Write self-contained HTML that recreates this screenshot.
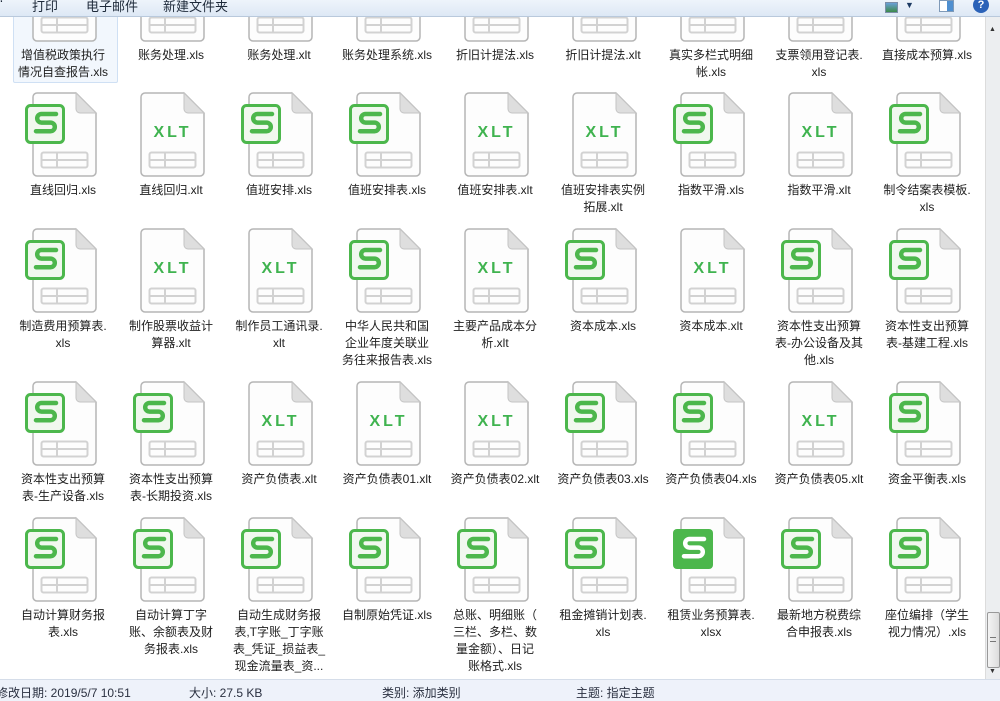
<!DOCTYPE html>
<html><head><meta charset="utf-8"><style>
*{margin:0;padding:0;box-sizing:border-box}
body{width:1000px;height:701px;overflow:hidden;background:#fff;font-family:"Liberation Sans","Noto Sans CJK SC",sans-serif;font-size:12px;color:#1e1e1e;position:relative}
#tb{position:absolute;left:0;top:0;width:1000px;height:17px;background:linear-gradient(#eef4fb,#dde8f5);border-bottom:1px solid #b9c9dc;font-size:13px}
#tb span{position:absolute;top:-4px;color:#1e2a3a}
#area{position:absolute;left:0;top:17px;width:985px;height:662px;overflow:hidden;background:#fff}
.it{position:absolute;width:108px;height:160px}
.it svg{position:absolute;left:15px;top:-1px;width:74px;height:86px;overflow:visible}
.lb{position:absolute;left:0;top:90px;width:108px;text-align:center;line-height:17px;font-size:12px;white-space:nowrap}
#sb{position:absolute;left:985px;top:17px;width:15px;height:662px;background:#eceef0;border-left:1px solid #dcdcdc}
#st{position:absolute;left:0;top:679px;width:1000px;height:22px;background:#eef2fa;border-top:1px solid #d5dde9;font-size:12px;color:#2a3040}
#st span{position:absolute;top:4px}
</style></head><body>
<svg width="0" height="0" style="position:absolute">
<defs>
<g id="pg">
<path d="M1,5a4,4 0 0 1 4-4H44L64,21V80a4,4 0 0 1-4,4H5a4,4 0 0 1-4-4Z" fill="#fdfdfd" stroke="#b5b5b5" stroke-width="1.5"/>
<path d="M44,1V17a4,4 0 0 0 4,4H64Z" fill="#dedede" stroke="#c4c4c4" stroke-width="1"/>
<rect x="9.5" y="60.5" width="46" height="15" rx="2" fill="none" stroke="#d2d2d2" stroke-width="2"/>
<line x1="10" y1="68" x2="55" y2="68" stroke="#d2d2d2" stroke-width="2"/>
<line x1="25" y1="61" x2="25" y2="75" stroke="#d2d2d2" stroke-width="2"/>
</g>
<g id="s">
<use href="#pg"/>
<rect x="-5.5" y="13.5" width="37" height="37" rx="4" fill="#f1f8ef" stroke="#4cb74c" stroke-width="3"/>
<path d="M24,22H9.5a4.3,4.3 0 0 0 0,8.6H18.5a4.3,4.3 0 0 1 0,8.6H4" fill="none" stroke="#4cb74c" stroke-width="4.5" stroke-linecap="round"/>
</g>
<g id="f">
<use href="#pg"/>
<rect x="-7" y="12" width="40" height="40" rx="4" fill="#4cb74c"/>
<path d="M24,22H9.5a4.3,4.3 0 0 0 0,8.6H18.5a4.3,4.3 0 0 1 0,8.6H4" fill="none" stroke="#fff" stroke-width="4.5" stroke-linecap="round"/>
</g>
<g id="x">
<use href="#pg"/>
<text x="32.5" y="45" text-anchor="middle" font-family="Liberation Sans,sans-serif" font-weight="bold" font-size="16" letter-spacing="3" fill="#3fb34f">XLT</text>
</g>
</defs></svg>

<div id="tb"><span style="left:0">&#8216;</span><span style="left:32px">打印</span><span style="left:86px">电子邮件</span><span style="left:163px">新建文件夹</span>
<span style="left:885px;top:2px;width:13px;height:11px;background:linear-gradient(#6aa0d8,#3d8a4a);border:1px solid #7a8ea8"></span>
<span style="left:905px;top:0;font-size:9px;color:#1d3b63">▼</span>
<span style="left:939px;top:0;width:15px;height:12px;border:1px solid #7f9ab8;background:linear-gradient(90deg,#fff 55%,#4f8fd0 55%)"></span>
<span style="left:973px;top:-3px;width:16px;height:16px;border-radius:50%;background:#2b62b8;color:#fff;font-weight:bold;text-align:center;font-size:11px;line-height:16px">?</span>
</div>

<div id="area">
<div style="position:absolute;left:13px;top:-10px;width:105px;height:76px;background:#f2f7fd;border:1px solid #cfe0f4;border-radius:2px"></div>
<div class="it" style="left:9px;top:-60px"><svg viewBox="-8 -1 74 86"><use href="#s"/></svg><div class="lb">增值税政策执行<br>情况自查报告.xls</div></div>
<div class="it" style="left:117px;top:-60px"><svg viewBox="-8 -1 74 86"><use href="#s"/></svg><div class="lb">账务处理.xls</div></div>
<div class="it" style="left:225px;top:-60px"><svg viewBox="-8 -1 74 86"><use href="#x"/></svg><div class="lb">账务处理.xlt</div></div>
<div class="it" style="left:333px;top:-60px"><svg viewBox="-8 -1 74 86"><use href="#s"/></svg><div class="lb">账务处理系统.xls</div></div>
<div class="it" style="left:441px;top:-60px"><svg viewBox="-8 -1 74 86"><use href="#s"/></svg><div class="lb">折旧计提法.xls</div></div>
<div class="it" style="left:549px;top:-60px"><svg viewBox="-8 -1 74 86"><use href="#x"/></svg><div class="lb">折旧计提法.xlt</div></div>
<div class="it" style="left:657px;top:-60px"><svg viewBox="-8 -1 74 86"><use href="#s"/></svg><div class="lb">真实多栏式明细<br>帐.xls</div></div>
<div class="it" style="left:765px;top:-60px"><svg viewBox="-8 -1 74 86"><use href="#s"/></svg><div class="lb">支票领用登记表.<br>xls</div></div>
<div class="it" style="left:873px;top:-60px"><svg viewBox="-8 -1 74 86"><use href="#s"/></svg><div class="lb">直接成本预算.xls</div></div>

<div class="it" style="left:9px;top:75px"><svg viewBox="-8 -1 74 86"><use href="#s"/></svg><div class="lb">直线回归.xls</div></div>
<div class="it" style="left:117px;top:75px"><svg viewBox="-8 -1 74 86"><use href="#x"/></svg><div class="lb">直线回归.xlt</div></div>
<div class="it" style="left:225px;top:75px"><svg viewBox="-8 -1 74 86"><use href="#s"/></svg><div class="lb">值班安排.xls</div></div>
<div class="it" style="left:333px;top:75px"><svg viewBox="-8 -1 74 86"><use href="#s"/></svg><div class="lb">值班安排表.xls</div></div>
<div class="it" style="left:441px;top:75px"><svg viewBox="-8 -1 74 86"><use href="#x"/></svg><div class="lb">值班安排表.xlt</div></div>
<div class="it" style="left:549px;top:75px"><svg viewBox="-8 -1 74 86"><use href="#x"/></svg><div class="lb">值班安排表实例<br>拓展.xlt</div></div>
<div class="it" style="left:657px;top:75px"><svg viewBox="-8 -1 74 86"><use href="#s"/></svg><div class="lb">指数平滑.xls</div></div>
<div class="it" style="left:765px;top:75px"><svg viewBox="-8 -1 74 86"><use href="#x"/></svg><div class="lb">指数平滑.xlt</div></div>
<div class="it" style="left:873px;top:75px"><svg viewBox="-8 -1 74 86"><use href="#s"/></svg><div class="lb">制令结案表模板.<br>xls</div></div>

<div class="it" style="left:9px;top:211px"><svg viewBox="-8 -1 74 86"><use href="#s"/></svg><div class="lb">制造费用预算表.<br>xls</div></div>
<div class="it" style="left:117px;top:211px"><svg viewBox="-8 -1 74 86"><use href="#x"/></svg><div class="lb">制作股票收益计<br>算器.xlt</div></div>
<div class="it" style="left:225px;top:211px"><svg viewBox="-8 -1 74 86"><use href="#x"/></svg><div class="lb">制作员工通讯录.<br>xlt</div></div>
<div class="it" style="left:333px;top:211px"><svg viewBox="-8 -1 74 86"><use href="#s"/></svg><div class="lb">中华人民共和国<br>企业年度关联业<br>务往来报告表.xls</div></div>
<div class="it" style="left:441px;top:211px"><svg viewBox="-8 -1 74 86"><use href="#x"/></svg><div class="lb">主要产品成本分<br>析.xlt</div></div>
<div class="it" style="left:549px;top:211px"><svg viewBox="-8 -1 74 86"><use href="#s"/></svg><div class="lb">资本成本.xls</div></div>
<div class="it" style="left:657px;top:211px"><svg viewBox="-8 -1 74 86"><use href="#x"/></svg><div class="lb">资本成本.xlt</div></div>
<div class="it" style="left:765px;top:211px"><svg viewBox="-8 -1 74 86"><use href="#s"/></svg><div class="lb">资本性支出预算<br>表-办公设备及其<br>他.xls</div></div>
<div class="it" style="left:873px;top:211px"><svg viewBox="-8 -1 74 86"><use href="#s"/></svg><div class="lb">资本性支出预算<br>表-基建工程.xls</div></div>

<div class="it" style="left:9px;top:364px"><svg viewBox="-8 -1 74 86"><use href="#s"/></svg><div class="lb">资本性支出预算<br>表-生产设备.xls</div></div>
<div class="it" style="left:117px;top:364px"><svg viewBox="-8 -1 74 86"><use href="#s"/></svg><div class="lb">资本性支出预算<br>表-长期投资.xls</div></div>
<div class="it" style="left:225px;top:364px"><svg viewBox="-8 -1 74 86"><use href="#x"/></svg><div class="lb">资产负债表.xlt</div></div>
<div class="it" style="left:333px;top:364px"><svg viewBox="-8 -1 74 86"><use href="#x"/></svg><div class="lb">资产负债表01.xlt</div></div>
<div class="it" style="left:441px;top:364px"><svg viewBox="-8 -1 74 86"><use href="#x"/></svg><div class="lb">资产负债表02.xlt</div></div>
<div class="it" style="left:549px;top:364px"><svg viewBox="-8 -1 74 86"><use href="#s"/></svg><div class="lb">资产负债表03.xls</div></div>
<div class="it" style="left:657px;top:364px"><svg viewBox="-8 -1 74 86"><use href="#s"/></svg><div class="lb">资产负债表04.xls</div></div>
<div class="it" style="left:765px;top:364px"><svg viewBox="-8 -1 74 86"><use href="#x"/></svg><div class="lb">资产负债表05.xlt</div></div>
<div class="it" style="left:873px;top:364px"><svg viewBox="-8 -1 74 86"><use href="#s"/></svg><div class="lb">资金平衡表.xls</div></div>

<div class="it" style="left:9px;top:500px"><svg viewBox="-8 -1 74 86"><use href="#s"/></svg><div class="lb">自动计算财务报<br>表.xls</div></div>
<div class="it" style="left:117px;top:500px"><svg viewBox="-8 -1 74 86"><use href="#s"/></svg><div class="lb">自动计算丁字<br>账、余额表及财<br>务报表.xls</div></div>
<div class="it" style="left:225px;top:500px"><svg viewBox="-8 -1 74 86"><use href="#s"/></svg><div class="lb">自动生成财务报<br>表,T字账_丁字账<br>表_凭证_损益表_<br>现金流量表_资...</div></div>
<div class="it" style="left:333px;top:500px"><svg viewBox="-8 -1 74 86"><use href="#s"/></svg><div class="lb">自制原始凭证.xls</div></div>
<div class="it" style="left:441px;top:500px"><svg viewBox="-8 -1 74 86"><use href="#s"/></svg><div class="lb">总账、明细账（<br>三栏、多栏、数<br>量金额）、日记<br>账格式.xls</div></div>
<div class="it" style="left:549px;top:500px"><svg viewBox="-8 -1 74 86"><use href="#s"/></svg><div class="lb">租金摊销计划表.<br>xls</div></div>
<div class="it" style="left:657px;top:500px"><svg viewBox="-8 -1 74 86"><use href="#f"/></svg><div class="lb">租赁业务预算表.<br>xlsx</div></div>
<div class="it" style="left:765px;top:500px"><svg viewBox="-8 -1 74 86"><use href="#s"/></svg><div class="lb">最新地方税费综<br>合申报表.xls</div></div>
<div class="it" style="left:873px;top:500px"><svg viewBox="-8 -1 74 86"><use href="#s"/></svg><div class="lb">座位编排（学生<br>视力情况）.xls</div></div>
</div>

<div id="sb">
<div style="position:absolute;left:3px;top:9px;font-size:7px;color:#333">▲</div>
<div style="position:absolute;left:1px;top:595px;width:13px;height:56px;background:linear-gradient(90deg,#f4f4f4,#dcdcdc);border:1px solid #999;border-radius:2px"></div>
<div style="position:absolute;left:4px;top:620px;width:6px;height:5px;border-top:1px solid #777;border-bottom:1px solid #777"></div>
<div style="position:absolute;left:3px;top:651px;font-size:7px;color:#333">▼</div>
</div>

<div id="st"><span style="left:-4px">修改日期: 2019/5/7 10:51</span><span style="left:189px">大小: 27.5 KB</span><span style="left:382px">类别: 添加类别</span><span style="left:576px">主题: 指定主题</span></div>
</body></html>
